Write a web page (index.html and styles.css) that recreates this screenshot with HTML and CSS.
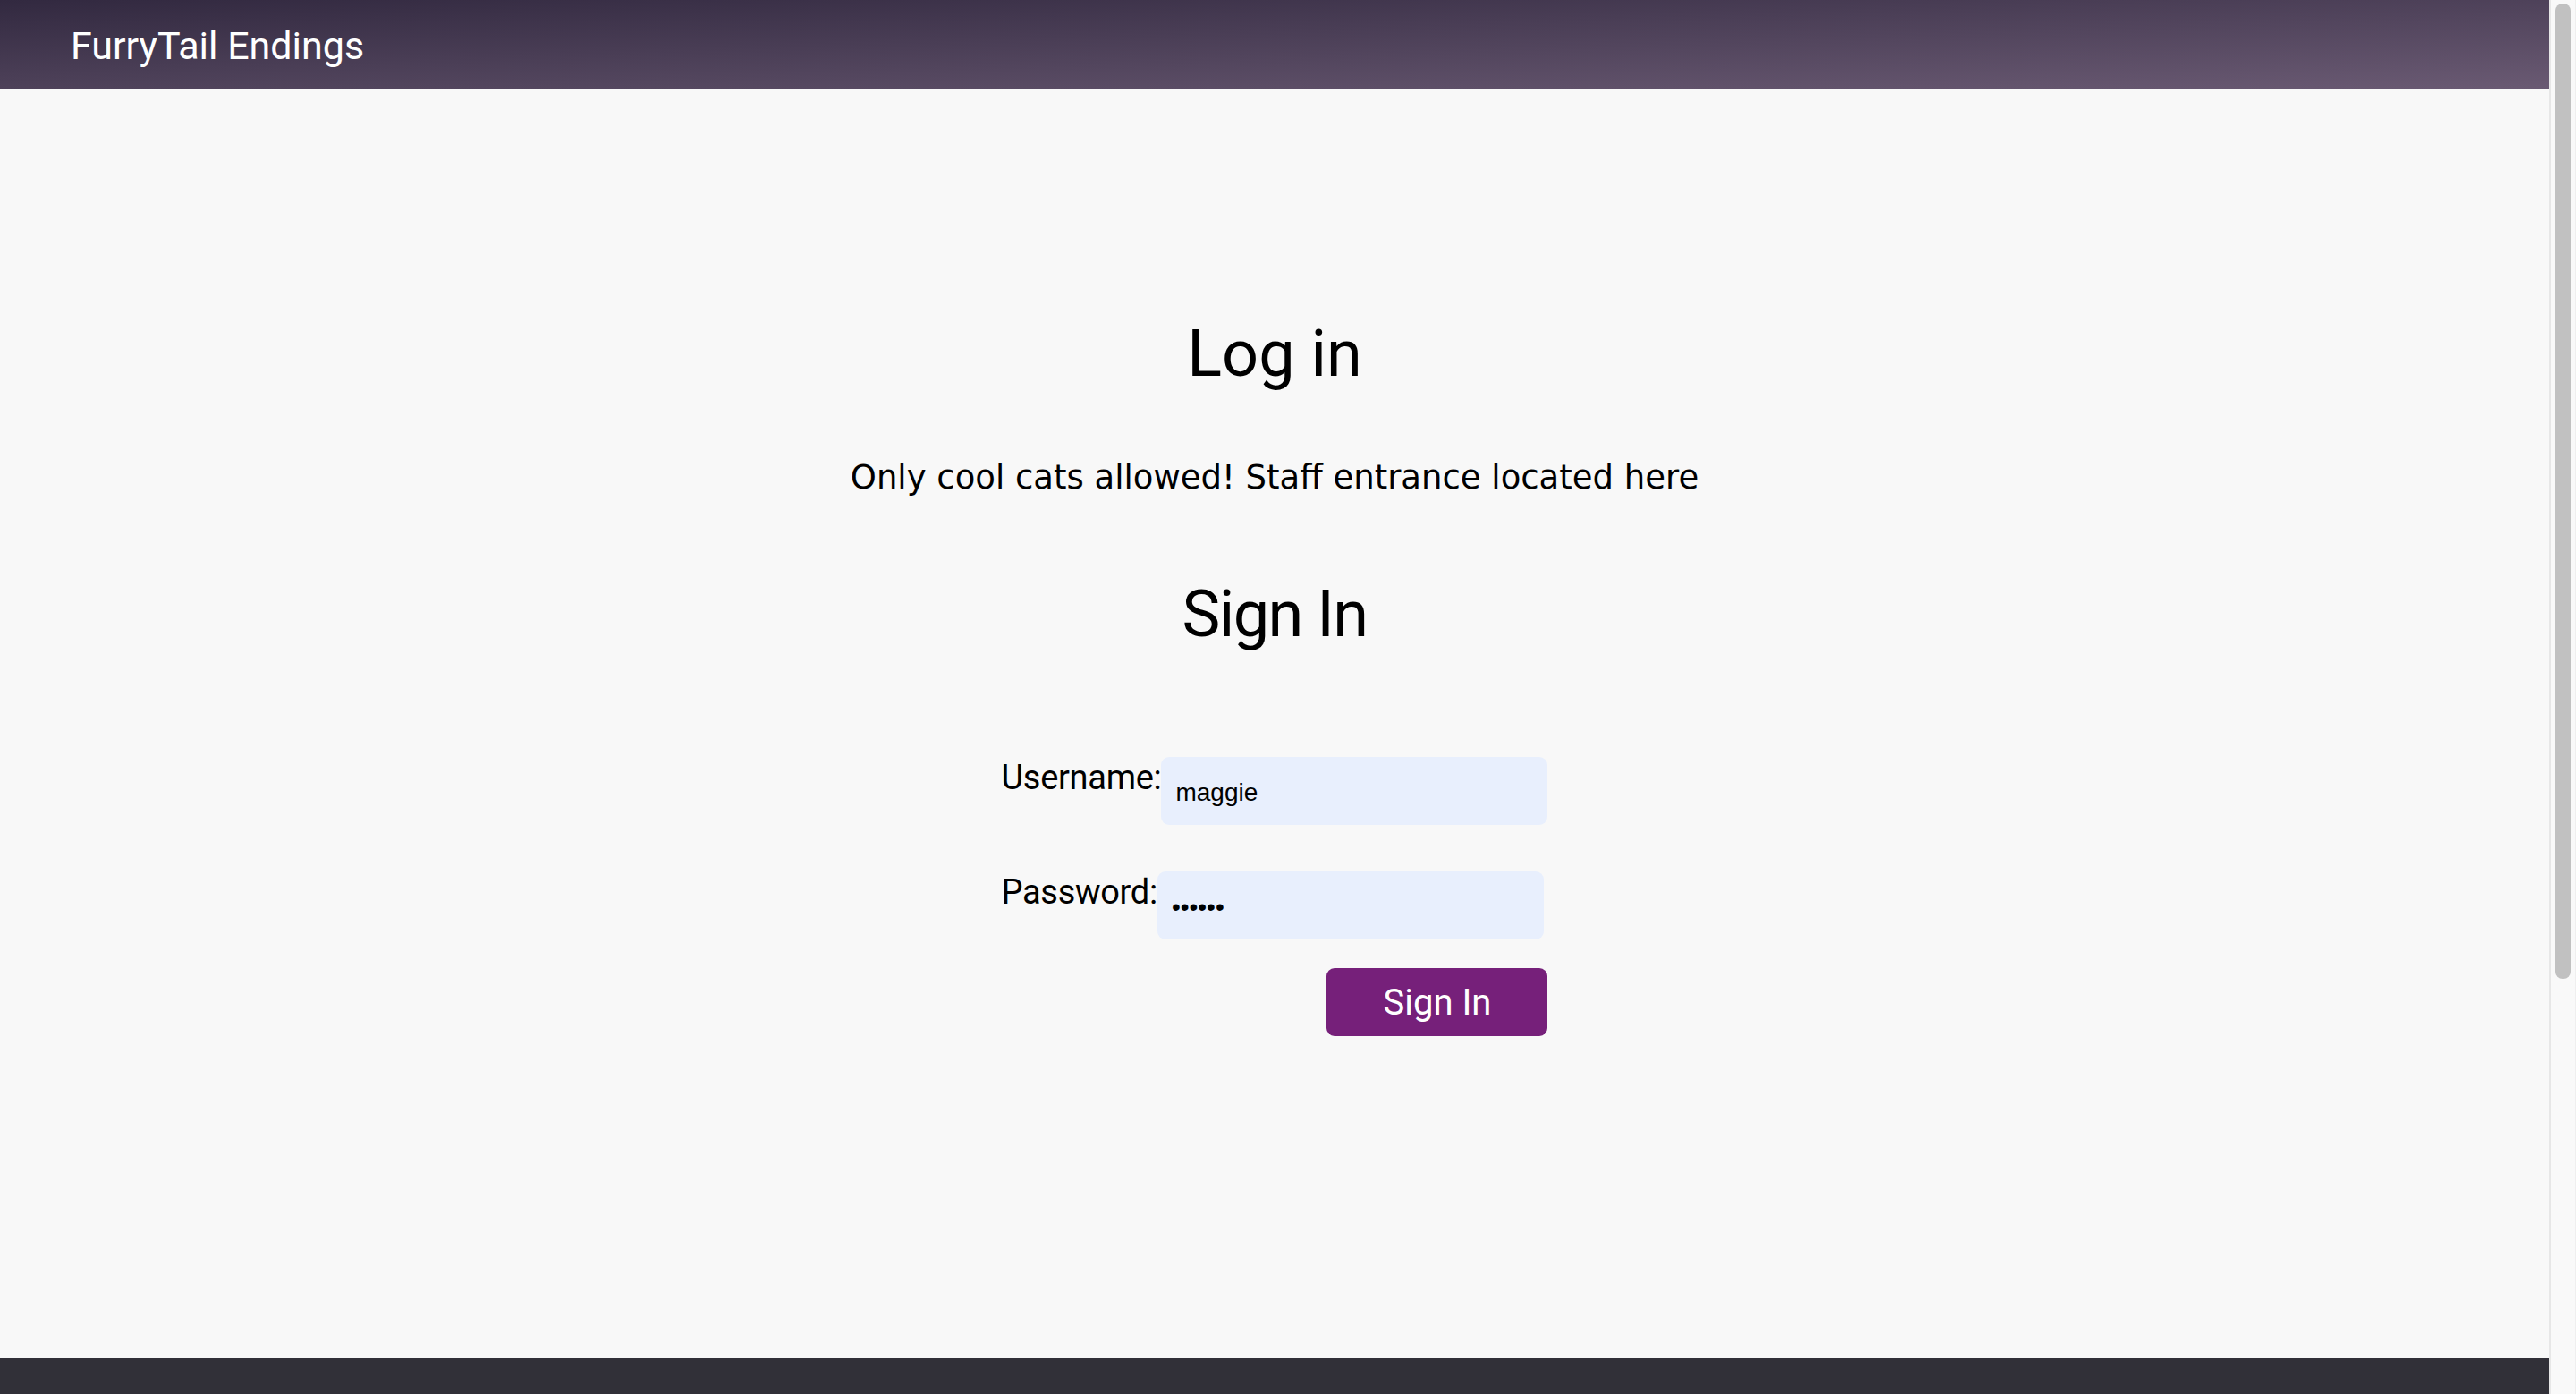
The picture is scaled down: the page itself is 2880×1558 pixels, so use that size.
FILE: index.html
```html
<!DOCTYPE html>
<html lang="en">
<head>
<meta charset="utf-8">
<title>FurryTail Endings - Log in</title>
<link rel="stylesheet" href="styles.css">
</head>
<body>
  <div class="page">
    <header class="topbar">
      <span class="brand">FurryTail Endings</span>
    </header>
    <main class="content">
      <h1 class="title">Log in</h1>
      <p class="intro">Only cool cats allowed! Staff entrance located here</p>
      <h2 class="subtitle">Sign In</h2>
      <form class="login-form">
        <div class="form-row row-user">
          <label class="field-label" for="username">Username:</label>
          <input class="field-input" id="username" type="text" value="maggie">
        </div>
        <div class="form-row row-pass">
          <label class="field-label" for="password">Password:</label>
          <input class="field-input" id="password" type="password" value="kitten">
        </div>
        <div class="form-actions">
          <button class="submit-btn" type="button">Sign In</button>
        </div>
      </form>
    </main>
    <footer class="site-footer"></footer>
  </div>
  <div class="scrollbar" aria-hidden="true">
    <div class="scrollbar-thumb"></div>
  </div>
</body>
</html>
```
FILE: styles.css
```css
html {
  background: #f8f8f8;
}
body {
  margin: 0;
  background: #f8f8f8;
  font-family: Roboto, "Liberation Sans", Arial, sans-serif;
  color: #000;
  display: flex;
  align-items: flex-start;
}
.page {
  flex: 1;
  min-width: 0;
}
.scrollbar {
  position: sticky;
  top: 0;
  flex: none;
  width: 30px;
  height: 100vh;
  box-sizing: border-box;
  background: #f9f9f9;
  border-left: 2px solid #e7e7e7;
  border-right: 1px solid #efefef;
  padding: 4px 5px 0 5px;
}
.scrollbar-thumb {
  height: 1090px;
  background: #c1c1c1;
  border-radius: 8px;
}
.topbar {
  height: 100px;
  display: flex;
  align-items: center;
  padding-left: 79px;
  background: linear-gradient(to bottom right, #322940, #6a5a73);
}
.brand {
  color: #fff;
  font-size: 43px;
  line-height: 52px;
  padding-top: 2px;
}
.content {
  height: 1418px;
  display: flex;
  flex-direction: column;
  align-items: center;
}
.title {
  margin: 254px 0 0;
  font-size: 72px;
  line-height: 84px;
  font-weight: 400;
}
.intro {
  margin: 73px 0 0;
  font-family: "DejaVu Sans", "Liberation Sans", sans-serif;
  font-size: 37px;
  line-height: 46px;
}
.subtitle {
  margin: 88px 0 0;
  font-size: 72px;
  line-height: 84px;
  font-weight: 400;
  letter-spacing: -1.5px;
}
.login-form {
  margin-top: 117px;
  display: flex;
  flex-direction: column;
}
.form-row {
  display: flex;
  align-items: flex-start;
}
.row-user {
  margin-bottom: 52px;
}
.row-pass {
  margin-bottom: 32px;
}
.field-label {
  font-size: 38px;
  line-height: 46px;
  letter-spacing: -0.3px;
}
.field-input {
  width: 432px;
  height: 76px;
  box-sizing: border-box;
  border: none;
  border-radius: 9px;
  background: #e8effd;
  padding: 4px 16px 0;
  font-family: "Liberation Sans", Arial, sans-serif;
  font-size: 28px;
  color: #000;
  outline: none;
}
.form-actions {
  display: flex;
  justify-content: flex-end;
}
.submit-btn {
  width: 247px;
  height: 76px;
  border: none;
  border-radius: 9px;
  background: #76207a;
  color: #fff;
  font-family: Roboto, "Liberation Sans", Arial, sans-serif;
  font-size: 40px;
  cursor: pointer;
}
.site-footer {
  height: 700px;
  background: #313038;
}
```
